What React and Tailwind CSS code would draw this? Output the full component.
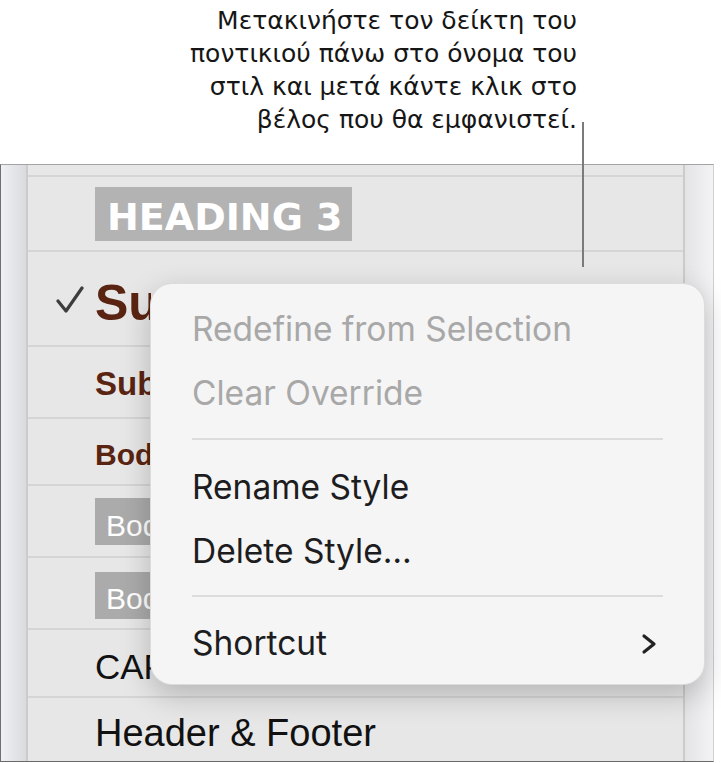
import React from 'react';

const brown = 'text-[#5a2412]';

const Check = () => (
  <svg width="30" height="30" viewBox="0 0 30 30" className="mb-[5px]">
    <polyline points="2,15 10,25 26,2" fill="none" stroke="#3d3d3f" strokeWidth="3.2" strokeLinecap="round" strokeLinejoin="round" />
  </svg>
);

// labels hidden behind the menu are clipped at its left edge
const rows = [
  { h: 'h-[12px] border-b-2', body: null },
  {
    h: 'h-[75px] border-b-2',
    body: (
      <div className="h-[54px] w-[257px] bg-[#b3b3b3] flex items-center pt-[7px] pl-[12px] font-['DejaVu_Sans',sans-serif] font-bold text-[38px] leading-none text-white">
        HEADING 3
      </div>
    ),
  },
  {
    h: 'h-[95px] border-b-2 pt-[9px]',
    check: true,
    clip: true,
    body: <span className={`text-[50px] leading-none font-bold ${brown}`}>Subtitle</span>,
  },
  {
    h: 'h-[72px] border-b-2 pt-[5px]',
    clip: true,
    body: <span className={`text-[33px] leading-none font-bold ${brown}`}>Subheading</span>,
  },
  {
    h: 'h-[67px] border-b-2 pt-[8px]',
    clip: true,
    body: <span className={`text-[30px] leading-none font-bold ${brown}`}>Body Bold</span>,
  },
  {
    h: 'h-[72px] border-b-2 pt-[1px]',
    clip: true,
    body: (
      <div className="h-[47px] w-[200px] bg-[#ababab] pt-[13px] pl-[11px] text-[30px] leading-none text-white">Body</div>
    ),
  },
  {
    h: 'h-[72px] border-b-2 pt-[4px]',
    clip: true,
    body: (
      <div className="h-[47px] w-[200px] bg-[#ababab] pt-[12px] pl-[11px] text-[30px] leading-none text-white">Body Small</div>
    ),
  },
  {
    h: 'h-[68px] border-b-2 pt-[8px]',
    clip: true,
    body: <span className="text-[35px] leading-none text-[#111]">CAPTION</span>,
  },
  {
    h: 'flex-1 pt-[8px]',
    body: <span className="text-[38px] leading-none text-[#111]">Header &amp; Footer</span>,
  },
];

const MenuItem = ({ children, disabled, chevron }) => (
  <div
    className={`h-[64px] flex items-center justify-between pl-[41px] pr-[46px] text-[33.5px] leading-none ${
      disabled ? 'text-[#a8a8a8]' : 'text-[#1d1d1f]'
    }`}
  >
    <span>{children}</span>
    {chevron && (
      <svg width="17" height="22" viewBox="0 0 17 22">
        <polyline points="3,3 13,11 3,19" fill="none" stroke="#222" strokeWidth="3.2" strokeLinecap="round" strokeLinejoin="round" />
      </svg>
    )}
  </div>
);

const Sep = ({ className }) => <div className={`h-[2px] mx-[41px] bg-[#dcdcdc] ${className}`} />;

export default function App() {
  return (
    <div className="w-[721px] h-[763px] bg-white relative overflow-hidden font-['Liberation_Sans',Arial,sans-serif]">
      <div className="h-[164px] pt-[4px] pr-[144px] text-right font-['DejaVu_Sans',sans-serif] text-[25px] leading-[33px] text-[#161616]">
        <p>
          Μετακινήστε τον δείκτη του
          <br />
          ποντικιού πάνω στο όνομα του
          <br />
          στιλ και μετά κάντε κλικ στο
          <br />
          βέλος που θα εμφανιστεί.
        </p>
      </div>

      <div className="w-[714px] h-[598px] border-t border-t-[#a4a4a4] border-l border-l-[#6f6f6f] border-b border-b-[#6a6a6a] border-r border-r-[#d0d0d0] flex">
        <div className="w-[27px] bg-gradient-to-r from-[#eef0f3] to-[#dadbdf] border-r-2 border-[#cbcbcb]" />
        <div className="w-[655px] bg-[#e7e7e7] flex flex-col overflow-hidden">
          {rows.map((r, i) => (
            <div key={i} className={`${r.h} border-[#d5d5d5] flex items-center shrink-0`}>
              <div className="w-[67px] shrink-0 flex justify-end pr-[9px]">{r.check && <Check />}</div>
              <div className={`whitespace-nowrap ${r.clip ? 'w-[56px] overflow-hidden' : ''}`}>{r.body}</div>
            </div>
          ))}
        </div>
        <div className="flex-1 border-l-2 border-[#cbcbcb] bg-gradient-to-r from-[#e4e4e7] to-[#f3f3f5]" />
      </div>

      <div className="absolute left-[582px] top-[122px] w-[2px] h-[145px] bg-[#7b7b7b]" />

      <div className="absolute left-[150px] top-[283px] w-[555px] h-[402px] rounded-[22px] bg-[#f5f5f5] border border-black/10 shadow-[0_10px_30px_rgba(0,0,0,0.22)] pt-[14px] font-['Inter','Liberation_Sans',sans-serif]">
        <MenuItem disabled>Redefine from Selection</MenuItem>
        <MenuItem disabled>Clear Override</MenuItem>
        <Sep className="mt-[12px] mb-[16px]" />
        <MenuItem>Rename Style</MenuItem>
        <MenuItem>Delete Style…</MenuItem>
        <Sep className="mt-[11px] mb-[15px]" />
        <MenuItem chevron>Shortcut</MenuItem>
      </div>
    </div>
  );
}
